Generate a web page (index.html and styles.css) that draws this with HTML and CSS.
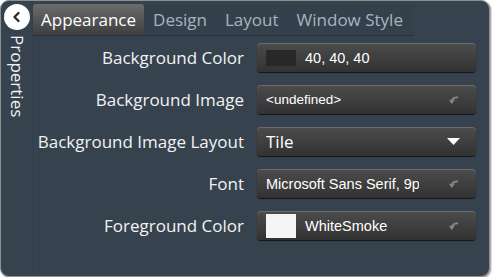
FILE: index.html
```html
<!DOCTYPE html>
<html lang="en">
<head>
    <meta charset="UTF-8">
    <title>Properties</title>
    <link rel="stylesheet" href="styles.css">
</head>
<body>
    <div class="panel">
        <aside class="side">
            <button class="back" type="button">
                <svg width="12" height="12" viewBox="0 0 12 12">
                    <path d="M7.5 2 L3.5 6 L7.5 10" fill="none" stroke="#2b2b2b" stroke-width="2.4" stroke-linecap="round" stroke-linejoin="round"/>
                </svg>
            </button>
            <span class="side-title">Properties</span>
        </aside>
        <div class="content">
            <nav class="tabs">
                <span class="tab active">Appearance</span>
                <span class="tab">Design</span>
                <span class="tab">Layout</span>
                <span class="tab">Window Style</span>
            </nav>
            <div class="props">
                <label class="prop-label">Background Color</label>
                <div class="field">
                    <span class="swatch dark"></span>
                    <span class="value">40, 40, 40</span>
                </div>

                <label class="prop-label">Background Image</label>
                <div class="field">
                    <span class="value small">&lt;undefined&gt;</span>
                    <svg class="reset" width="11" height="9" viewBox="0 0 11 9">
                        <path d="M3.8 7.5 C3.8 4 6 2.2 10 2.2" fill="none" stroke="#858585" stroke-width="2"/>
                        <path d="M0.8 4.8 L6.8 4.8 L3.8 9 Z" fill="#858585"/>
                    </svg>
                </div>

                <label class="prop-label">Background Image Layout</label>
                <div class="field">
                    <span class="value big">Tile</span>
                    <svg class="drop" width="13" height="7" viewBox="0 0 13 7">
                        <path d="M0 0 L13 0 L6.5 7 Z" fill="#ffffff"/>
                    </svg>
                </div>

                <label class="prop-label">Font</label>
                <div class="field">
                    <span class="value clip">Microsoft Sans Serif, 9pt</span>
                    <svg class="reset" width="11" height="9" viewBox="0 0 11 9">
                        <path d="M3.8 7.5 C3.8 4 6 2.2 10 2.2" fill="none" stroke="#858585" stroke-width="2"/>
                        <path d="M0.8 4.8 L6.8 4.8 L3.8 9 Z" fill="#858585"/>
                    </svg>
                </div>

                <label class="prop-label">Foreground Color</label>
                <div class="field">
                    <span class="swatch light"></span>
                    <span class="value">WhiteSmoke</span>
                    <svg class="reset" width="11" height="9" viewBox="0 0 11 9">
                        <path d="M3.8 7.5 C3.8 4 6 2.2 10 2.2" fill="none" stroke="#858585" stroke-width="2"/>
                        <path d="M0.8 4.8 L6.8 4.8 L3.8 9 Z" fill="#858585"/>
                    </svg>
                </div>
            </div>
        </div>
    </div>
</body>
</html>
```

FILE: styles.css
```css
body {
    margin: 0;
    background-color: #ffffff;
    font-family: "Open Sans", "Noto Sans", sans-serif;
}
.panel {
    display: flex;
    width: 488px;
    height: 275px;
    background-color: #36434f;
    border: 1px solid #8f8f8f;
    border-radius: 9px;
    box-shadow: 1px 1px 2px rgba(0, 0, 0, 0.45);
    overflow: hidden;
}
.side {
    width: 31px;
    display: flex;
    flex-direction: column;
    align-items: center;
    padding-top: 3px;
    border-right: 1px solid #33404b;
}
.back {
    width: 26px;
    height: 26px;
    border-radius: 50%;
    border: none;
    background-color: #ffffff;
    padding: 0;
    display: flex;
    justify-content: center;
    align-items: center;
}
.side-title {
    writing-mode: vertical-rl;
    color: #f2f2f2;
    font-size: 17px;
    margin-top: 5px;
    margin-left: 1px;
}
.content {
    flex: 1;
}
.tabs {
    display: flex;
    width: 381px;
    height: 31px;
    margin-top: 3px;
    background-color: #34414d;
    border-bottom: 1px solid #29323b;
}
.tab {
    color: #a7b3bd;
    font-size: 17px;
    line-height: 31px;
    padding: 0 9px;
}
.tab.active {
    color: #ffffff;
    padding: 0 8px;
    background: linear-gradient(#6c6c6c, #3e3e3e);
    border-radius: 3px 3px 0 0;
}
.props {
    display: grid;
    grid-template-columns: 211px 219px;
    column-gap: 13px;
    row-gap: 13px;
    padding-top: 7px;
}
.prop-label {
    color: #f2f2f2;
    font-size: 17px;
    text-align: right;
    line-height: 29px;
}
.field {
    height: 29px;
    display: flex;
    align-items: center;
    padding: 0 9px;
    border-radius: 4px;
    background: linear-gradient(#4c4c4c, #323232);
    box-shadow: inset 0 1px 0 rgba(255, 255, 255, 0.18), 0 1px 1px rgba(0, 0, 0, 0.7);
    box-sizing: border-box;
}
.swatch {
    width: 30px;
    flex-shrink: 0;
    margin-right: 9px;
}
.swatch.dark {
    height: 16px;
    background-color: #282828;
}
.swatch.light {
    height: 24px;
    background-color: #f5f5f5;
}
.value {
    flex: 1;
    color: #ffffff;
    font-family: "Liberation Sans", Arial, sans-serif;
    font-size: 14.5px;
    white-space: nowrap;
    overflow: hidden;
}
.value.small {
    font-size: 13.5px;
}
.value.big {
    font-family: "Open Sans", "Noto Sans", sans-serif;
    font-size: 17px;
}
.value.clip {
    flex: none;
    width: 153px;
    margin-right: 24px;
}
.reset, .drop {
    flex-shrink: 0;
    margin-left: auto;
    margin-right: 8px;
}
.drop {
    margin-right: 7px;
}
```
